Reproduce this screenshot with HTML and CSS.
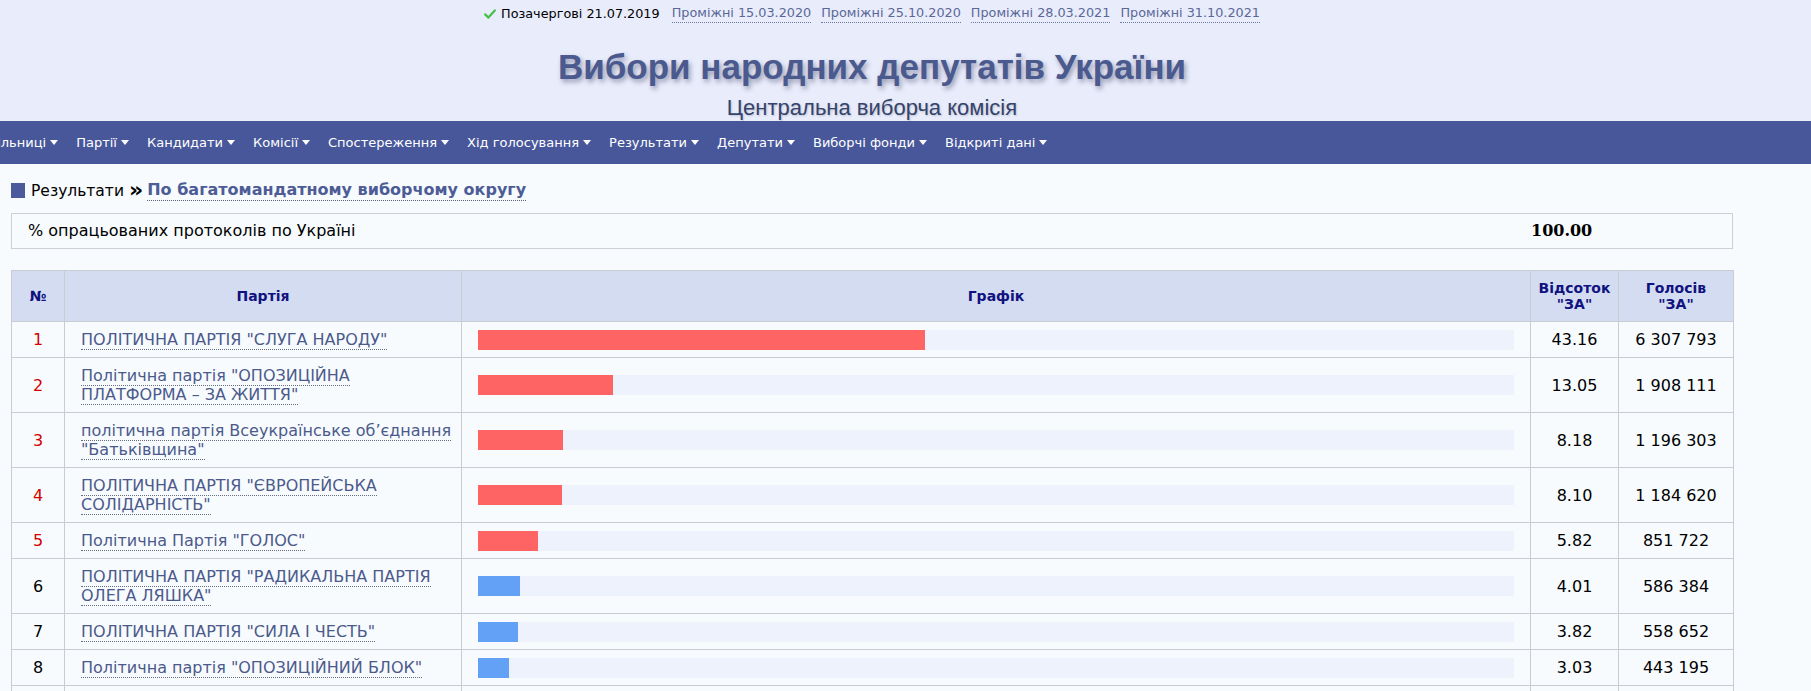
FILE: index.html
```html
<!DOCTYPE html>
<html lang="uk">
<head>
<meta charset="utf-8">
<title>Вибори народних депутатів України</title>
<link rel="stylesheet" href="styles.css">
</head>
<body>
<header class="masthead">
  <div class="masthead-inner">
    <div class="elections">
      <span class="current">
        <svg class="check" viewBox="0 0 12 10" width="12" height="10"><path d="M1.2 5.4 L4.4 8.6 L10.8 1.4" fill="none" stroke="#47c047" stroke-width="2.2" stroke-linecap="round" stroke-linejoin="round"/></svg>
        <span>Позачергові 21.07.2019</span>
      </span>
      <a class="election-link" href="#">Проміжні 15.03.2020</a>
      <a class="election-link" href="#">Проміжні 25.10.2020</a>
      <a class="election-link" href="#">Проміжні 28.03.2021</a>
      <a class="election-link" href="#">Проміжні 31.10.2021</a>
    </div>
    <h1 class="title">Вибори народних депутатів України</h1>
    <div class="subtitle">Центральна виборча комісія</div>
  </div>
</header>

<nav class="menu">
  <ul class="menu-list">
    <li class="menu-item">Дільниці<svg class="caret" viewBox="0 0 8 5"><path d="M0 0H8L4 5Z" fill="#fff"/></svg></li>
    <li class="menu-item">Партії<svg class="caret" viewBox="0 0 8 5"><path d="M0 0H8L4 5Z" fill="#fff"/></svg></li>
    <li class="menu-item">Кандидати<svg class="caret" viewBox="0 0 8 5"><path d="M0 0H8L4 5Z" fill="#fff"/></svg></li>
    <li class="menu-item">Комісії<svg class="caret" viewBox="0 0 8 5"><path d="M0 0H8L4 5Z" fill="#fff"/></svg></li>
    <li class="menu-item">Спостереження<svg class="caret" viewBox="0 0 8 5"><path d="M0 0H8L4 5Z" fill="#fff"/></svg></li>
    <li class="menu-item">Хід голосування<svg class="caret" viewBox="0 0 8 5"><path d="M0 0H8L4 5Z" fill="#fff"/></svg></li>
    <li class="menu-item">Результати<svg class="caret" viewBox="0 0 8 5"><path d="M0 0H8L4 5Z" fill="#fff"/></svg></li>
    <li class="menu-item">Депутати<svg class="caret" viewBox="0 0 8 5"><path d="M0 0H8L4 5Z" fill="#fff"/></svg></li>
    <li class="menu-item">Виборчі фонди<svg class="caret" viewBox="0 0 8 5"><path d="M0 0H8L4 5Z" fill="#fff"/></svg></li>
    <li class="menu-item">Відкриті дані<svg class="caret" viewBox="0 0 8 5"><path d="M0 0H8L4 5Z" fill="#fff"/></svg></li>
  </ul>
</nav>

<main class="content">
  <div class="crumbs">
    <span class="crumb-mark"></span>
    <span>Результати</span>
    <span class="crumb-sep">»</span>
    <a class="crumb-link" href="#">По багатомандатному виборчому округу</a>
  </div>

  <div class="progress">
    <span class="progress-label">% опрацьованих протоколів по Україні</span>
    <span class="progress-value">100.00</span>
  </div>

  <table class="results">
    <colgroup>
      <col class="col-num">
      <col class="col-party">
      <col class="col-graph">
      <col class="col-pct">
      <col class="col-votes">
    </colgroup>
    <thead>
      <tr>
        <th>№</th>
        <th>Партія</th>
        <th>Графік</th>
        <th>Відсоток<br>"ЗА"</th>
        <th>Голосів<br>"ЗА"</th>
      </tr>
    </thead>
    <tbody>
      <tr>
        <td class="num num-pass">1</td>
        <td class="party"><a class="party-link" href="#">ПОЛІТИЧНА ПАРТІЯ "СЛУГА НАРОДУ"</a></td>
        <td class="graph"><div class="track"><div class="bar bar-pass" style="width:43.16%"></div></div></td>
        <td class="pct">43.16</td>
        <td class="votes">6 307 793</td>
      </tr>
      <tr>
        <td class="num num-pass">2</td>
        <td class="party"><a class="party-link" href="#">Політична партія "ОПОЗИЦІЙНА ПЛАТФОРМА – ЗА ЖИТТЯ"</a></td>
        <td class="graph"><div class="track"><div class="bar bar-pass" style="width:13.05%"></div></div></td>
        <td class="pct">13.05</td>
        <td class="votes">1 908 111</td>
      </tr>
      <tr>
        <td class="num num-pass">3</td>
        <td class="party"><a class="party-link" href="#">політична партія Всеукраїнське об’єднання "Батьківщина"</a></td>
        <td class="graph"><div class="track"><div class="bar bar-pass" style="width:8.18%"></div></div></td>
        <td class="pct">8.18</td>
        <td class="votes">1 196 303</td>
      </tr>
      <tr>
        <td class="num num-pass">4</td>
        <td class="party"><a class="party-link" href="#">ПОЛІТИЧНА ПАРТІЯ "ЄВРОПЕЙСЬКА СОЛІДАРНІСТЬ"</a></td>
        <td class="graph"><div class="track"><div class="bar bar-pass" style="width:8.10%"></div></div></td>
        <td class="pct">8.10</td>
        <td class="votes">1 184 620</td>
      </tr>
      <tr>
        <td class="num num-pass">5</td>
        <td class="party"><a class="party-link" href="#">Політична Партія "ГОЛОС"</a></td>
        <td class="graph"><div class="track"><div class="bar bar-pass" style="width:5.82%"></div></div></td>
        <td class="pct">5.82</td>
        <td class="votes">851 722</td>
      </tr>
      <tr>
        <td class="num">6</td>
        <td class="party"><a class="party-link" href="#">ПОЛІТИЧНА ПАРТІЯ "РАДИКАЛЬНА ПАРТІЯ ОЛЕГА ЛЯШКА"</a></td>
        <td class="graph"><div class="track"><div class="bar bar-fail" style="width:4.01%"></div></div></td>
        <td class="pct">4.01</td>
        <td class="votes">586 384</td>
      </tr>
      <tr>
        <td class="num">7</td>
        <td class="party"><a class="party-link" href="#">ПОЛІТИЧНА ПАРТІЯ "СИЛА І ЧЕСТЬ"</a></td>
        <td class="graph"><div class="track"><div class="bar bar-fail" style="width:3.82%"></div></div></td>
        <td class="pct">3.82</td>
        <td class="votes">558 652</td>
      </tr>
      <tr>
        <td class="num">8</td>
        <td class="party"><a class="party-link" href="#">Політична партія "ОПОЗИЦІЙНИЙ БЛОК"</a></td>
        <td class="graph"><div class="track"><div class="bar bar-fail" style="width:3.03%"></div></div></td>
        <td class="pct">3.03</td>
        <td class="votes">443 195</td>
      </tr>
      <tr>
        <td class="num">9</td>
        <td class="party"><a class="party-link" href="#">Політична партія "Українська Стратегія Гройсмана"</a></td>
        <td class="graph"><div class="track"><div class="bar bar-fail" style="width:2.41%"></div></div></td>
        <td class="pct">2.41</td>
        <td class="votes">352 934</td>
      </tr>
      <tr>
        <td class="num">10</td>
        <td class="party"><a class="party-link" href="#">Політична партія Анатолія Шарія</a></td>
        <td class="graph"><div class="track"><div class="bar bar-fail" style="width:2.23%"></div></div></td>
        <td class="pct">2.23</td>
        <td class="votes">327 152</td>
      </tr>
    </tbody>
  </table>
</main>
</body>
</html>
```

FILE: styles.css
```css
html {
  overflow: hidden;
}

body {
  margin: 0;
  background: #f7fbfe;
  color: #000;
  font-family: "DejaVu Sans", Verdana, sans-serif;
}

/* ---------- masthead ---------- */
.masthead {
  background: #e9ecfb;
  padding-top: 4px;
  padding-bottom: 1px;
}

.masthead-inner {
  margin-left: 11px;
  width: 1722px;
}

.elections {
  display: flex;
  justify-content: center;
  align-items: center;
  gap: 10px;
  font-size: 12.8px;
  line-height: 18px;
}

.current {
  display: flex;
  align-items: center;
  gap: 5px;
  margin-right: 2px;
}

.check {
  display: block;
}

.election-link {
  color: #5a6898;
  text-decoration: none;
  border-bottom: 1px dotted #6c78a0;
}

.title {
  margin: 24px 0 0;
  font-family: "Liberation Sans", Arial, sans-serif;
  font-size: 35px;
  font-weight: bold;
  line-height: 40px;
  color: #4a5a8e;
  text-align: center;
  text-shadow: 2px 3px 5px rgba(50, 55, 90, 0.45);
}

.subtitle {
  margin-top: 9px;
  font-family: "Liberation Sans", Arial, sans-serif;
  font-size: 22px;
  line-height: 24px;
  color: #34446c;
  text-align: center;
  text-shadow: 1px 1px 2px rgba(0, 0, 0, 0.18);
}

/* ---------- menu ---------- */
.menu {
  background: #48579a;
  height: 43px;
  overflow: hidden;
}

.menu-list {
  list-style: none;
  margin: 0 0 0 -22px;
  padding: 0;
  height: 43px;
  display: flex;
  align-items: center;
  white-space: nowrap;
}

.menu-item {
  flex-shrink: 0;
  display: flex;
  align-items: center;
  padding: 0 9px;
  color: #fff;
  font-size: 13px;
}

.caret {
  width: 8px;
  height: 5px;
  margin-left: 4px;
}

/* ---------- content ---------- */
.content {
  margin-left: 11px;
  width: 1722px;
}

.crumbs {
  margin-top: 16px;
  display: flex;
  align-items: center;
  font-size: 15.5px;
  line-height: 20px;
}

.crumb-mark {
  width: 14px;
  height: 15px;
  background: #4a5a9a;
  margin-right: 6px;
}

.crumb-sep {
  font-weight: bold;
  font-size: 22px;
  margin: -2px 4px 0 5px;
}

.crumb-link {
  font-size: 16px;
  font-weight: bold;
  color: #4d5c96;
  text-decoration: none;
  border-bottom: 1px dotted #5a6078;
}

.progress {
  margin-top: 12px;
  border: 1px solid #cdd0d6;
  display: flex;
  align-items: center;
  padding: 8px 0;
  line-height: 18px;
  font-size: 16px;
}

.progress-label {
  flex: 1;
  padding-left: 16px;
}

.progress-value {
  width: 201px;
  font-family: "DejaVu Serif", serif;
  font-size: 16px;
  font-weight: bold;
}

/* ---------- table ---------- */
.results {
  margin-top: 21px;
  width: 1722px;
  border-collapse: collapse;
  table-layout: fixed;
}

.col-num { width: 53px; }
.col-party { width: 397px; }
.col-graph { width: 1069px; }
.col-pct { width: 88px; }
.col-votes { width: 115px; }

.results th,
.results td {
  border: 1px solid #c9ccd3;
  vertical-align: middle;
}

.results th {
  background: #d4dcf1;
  color: #10127f;
  font-size: 14px;
  font-weight: bold;
  line-height: 16px;
  padding: 9px 4px;
  text-align: center;
}

.results td {
  padding: 8px 16px;
  font-size: 16px;
  line-height: 19px;
}

.results td.party {
  padding: 8px 8px 8px 16px;
}

.results td.num {
  padding: 8px 0;
  text-align: center;
}

.num-pass {
  color: #d40000;
}

.results td.graph {
  padding: 0 16px;
}

.track {
  height: 20px;
  background: #edf2fd;
}

.bar {
  height: 20px;
}

.bar-pass {
  background: #ff6464;
}

.bar-fail {
  background: #62a1f6;
}

.results td.pct,
.results td.votes {
  padding: 8px 0;
  text-align: center;
}

.party-link {
  color: #4c5a8b;
  text-decoration: none;
  border-bottom: 1px dotted #666c80;
}
```
